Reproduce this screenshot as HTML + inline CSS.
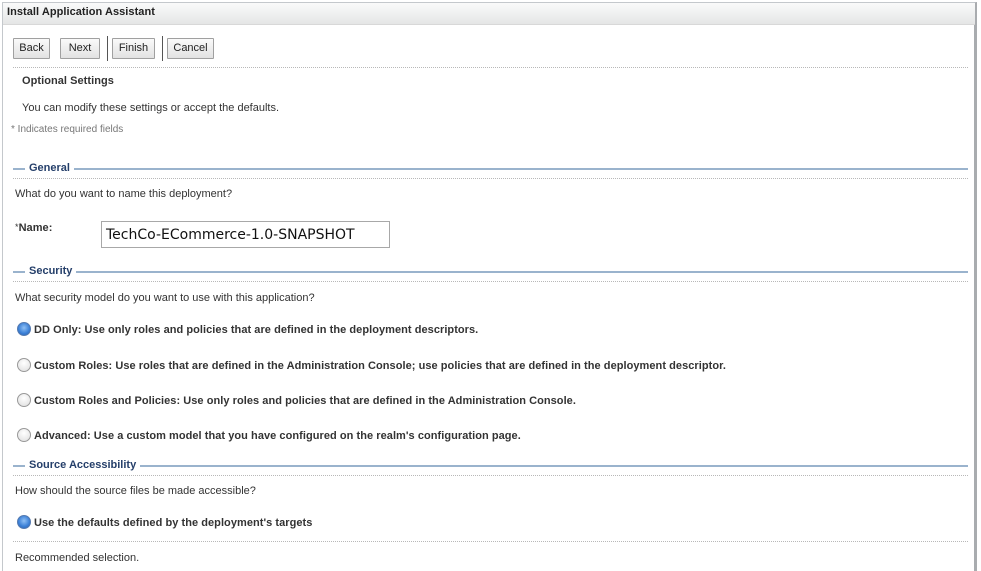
<!DOCTYPE html>
<html><head><meta charset="utf-8"><style>
*{margin:0;padding:0;box-sizing:border-box}
html,body{width:981px;height:571px;overflow:hidden}
body{background:#fff;font-family:"Liberation Sans",Arial,sans-serif;font-size:11px;color:#333;position:relative}
.a{position:absolute;white-space:nowrap}
.frame{position:absolute;left:2px;top:2px;width:975px;height:569px;border:1px solid #c4c8cc;border-bottom:none;border-right:3px solid #a9acaf}
.hdr{position:absolute;left:3px;top:3px;width:972px;height:22px;background:linear-gradient(#fafafa,#e5e6e6);border-bottom:1px solid #d8d8d8}
.btn{position:absolute;top:38px;height:21px;border:1px solid #a0a0a0;background:linear-gradient(#fafafa,#e2e2e2);font-size:11px;color:#222;text-align:center;line-height:19px;border-radius:1px}
.sep{position:absolute;top:36px;width:1px;height:25px;background:#555}
.dot{position:absolute;left:13px;width:955px;border-top:1px dotted #b8b8b8;height:0}
.sec{position:absolute;left:13px;width:955px;height:14px}
.sec .ln{position:absolute;left:0;right:0;top:7px;height:2px;background:#9ab3cd}
.sec span{position:absolute;left:12px;top:0;background:#fff;padding:0 4px;font-weight:bold;color:#253f6a;font-size:11px;line-height:14px}
.b{font-weight:bold;color:#333;letter-spacing:0.05px}
.r{position:absolute;left:17px;width:14px;height:14px;border-radius:50%;border:1px solid #999;background:radial-gradient(circle at 50% 35%,#fff,#ddd)}
.r.on{border-color:#557ab0;background:radial-gradient(circle at 50% 40%,#8fc0f5 0,#3a7fd6 60%,#2a5fa8 100%)}
</style></head><body>
<div class="frame"></div>
<div class="hdr"></div>
<div class="a b" style="left:7px;top:6px;color:#222">Install Application Assistant</div>
<div class="btn" style="left:13px;width:37px">Back</div>
<div class="btn" style="left:60px;width:40px">Next</div>
<div class="sep" style="left:107px"></div>
<div class="btn" style="left:112px;width:43px">Finish</div>
<div class="sep" style="left:162px"></div>
<div class="btn" style="left:167px;width:47px">Cancel</div>
<div class="dot" style="top:67px"></div>
<div class="a b" style="left:22px;top:75px">Optional Settings</div>
<div class="a" style="left:22px;top:102px">You can modify these settings or accept the defaults.</div>
<div class="a" style="left:11px;top:124px;color:#777;font-size:10px">* Indicates required fields</div>

<div class="sec" style="top:161px"><div class="ln"></div><span>General</span></div>
<div class="dot" style="top:178px"></div>
<div class="a" style="left:15px;top:188px">What do you want to name this deployment?</div>
<div class="a b" style="left:15px;top:222px"><span style="font-weight:normal;font-size:9px;vertical-align:top">*</span>Name:</div>
<div class="a" style="left:101px;top:221px;width:289px;height:27px;border:1px solid #a8a8a8;font-family:'DejaVu Sans',sans-serif;font-size:14px;color:#111;padding:5px 0 0 4px">TechCo-ECommerce-1.0-SNAPSHOT</div>

<div class="sec" style="top:264px"><div class="ln"></div><span>Security</span></div>
<div class="dot" style="top:281px"></div>
<div class="a" style="left:15px;top:292px">What security model do you want to use with this application?</div>
<div class="r on" style="top:322px"></div>
<div class="a b" style="left:34px;top:324px">DD Only: Use only roles and policies that are defined in the deployment descriptors.</div>
<div class="r" style="top:358px"></div>
<div class="a b" style="left:34px;top:360px">Custom Roles: Use roles that are defined in the Administration Console; use policies that are defined in the deployment descriptor.</div>
<div class="r" style="top:393px"></div>
<div class="a b" style="left:34px;top:395px">Custom Roles and Policies: Use only roles and policies that are defined in the Administration Console.</div>
<div class="r" style="top:428px"></div>
<div class="a b" style="left:34px;top:430px">Advanced: Use a custom model that you have configured on the realm's configuration page.</div>

<div class="sec" style="top:458px"><div class="ln"></div><span>Source Accessibility</span></div>
<div class="dot" style="top:475px"></div>
<div class="a" style="left:15px;top:485px">How should the source files be made accessible?</div>
<div class="r on" style="top:515px"></div>
<div class="a b" style="left:34px;top:517px">Use the defaults defined by the deployment's targets</div>
<div class="dot" style="top:541px"></div>
<div class="a" style="left:15px;top:552px">Recommended selection.</div>
</body></html>
